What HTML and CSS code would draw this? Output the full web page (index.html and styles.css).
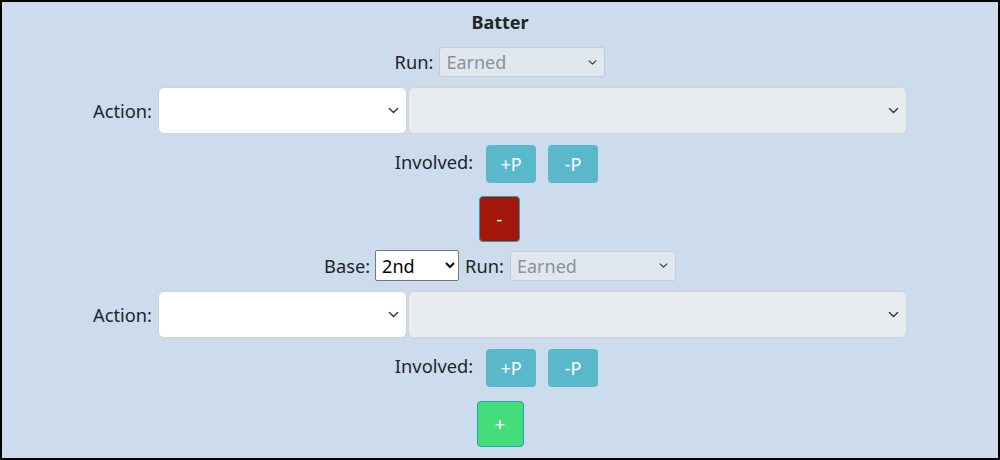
FILE: index.html
```html
<!DOCTYPE html>
<html>
<head>
<meta charset="utf-8">
<link rel="stylesheet" href="styles.css">
</head>
<body>
<div class="frame">
  <div class="title">Batter</div>

  <div class="row row-run">
    <label class="lbl">Run:</label>
    <select class="sel sel-run" disabled><option>Earned</option></select>
  </div>

  <div class="row row-action">
    <label class="lbl">Action:</label>
    <select class="sel sel-a"><option></option></select>
    <select class="sel sel-b" disabled><option></option></select>
  </div>

  <div class="row row-inv">
    <span class="lbl lbl-inv">Involved:</span>
    <button class="btn btn-info">+P</button>
    <button class="btn btn-info">-P</button>
  </div>

  <div class="row row-del">
    <button class="btn btn-del">-</button>
  </div>

  <div class="row row-base">
    <label class="lbl">Base:</label>
    <select class="sel-native"><option>2nd</option></select>
    <label class="lbl lbl-run2">Run:</label>
    <select class="sel sel-run" disabled><option>Earned</option></select>
  </div>

  <div class="row row-action">
    <label class="lbl">Action:</label>
    <select class="sel sel-a"><option></option></select>
    <select class="sel sel-b" disabled><option></option></select>
  </div>

  <div class="row row-inv">
    <span class="lbl lbl-inv">Involved:</span>
    <button class="btn btn-info">+P</button>
    <button class="btn btn-info">-P</button>
  </div>

  <div class="row row-add">
    <button class="btn btn-add">+</button>
  </div>
</div>
</body>
</html>
```

FILE: styles.css
```css
* { box-sizing: border-box; }
html, body { margin: 0; padding: 0; }
body {
  font-family: "Noto Sans", "Open Sans", sans-serif;
  color: #212529;
}
.frame {
  width: 1000px;
  height: 460px;
  border: 2px solid #000;
  background: #ccdcec;
  padding-top: 7px;
  overflow: hidden;
}
.title {
  text-align: center;
  font-weight: 700;
  font-size: 18px;
  line-height: 26px;
  height: 26px;
  color: #212529;
}
.row {
  display: flex;
  justify-content: center;
  align-items: center;
}
.lbl {
  font-size: 18.3px;
  color: #212529;
  line-height: 24px;
}
.sel {
  appearance: none;
  -webkit-appearance: none;
  font-family: inherit;
  font-size: 18px;
  border: 1px solid #ced4da;
  border-radius: 4px;
  background-color: #fff;
  background-image: url("data:image/svg+xml,%3csvg xmlns='http://www.w3.org/2000/svg' viewBox='0 0 16 16'%3e%3cpath fill='none' stroke='%23343a40' stroke-linecap='round' stroke-linejoin='round' stroke-width='2' d='M2 5l6 6 6-6'/%3e%3c/svg%3e");
  background-repeat: no-repeat;
  background-position: right 6px center;
  background-size: 13px 11px;
  color: #212529;
  padding: 0 30px 0 6px;
  margin: 0;
}
.sel:disabled {
  color: #8a9199;
  opacity: 1;
}
.row-run { margin-top: 12px; height: 30px; }
.row-run .lbl { margin-right: 6px; }
.sel-run {
  width: 166px;
  height: 30px;
  background-color: #e1e7ef;
  border-color: #c3ccd6;
  border-radius: 3px;
  background-size: 11px 9px;
  opacity: 1;
}
.row-action { margin-top: 10px; height: 47px; }
.row-action .lbl { margin-right: 6px; }
.sel-a { width: 249px; height: 47px; border-radius: 6px; }
.sel-b {
  width: 499px;
  height: 47px;
  margin-left: 1px;
  background-color: #e9ecef;
  border-radius: 6px;
}
.row-inv { margin-top: 11px; height: 38px; padding-right: 7px; }
.lbl-inv { margin-right: 13px; margin-top: -4px; }
.btn {
  font-family: inherit;
  font-size: 18px;
  color: #fff;
  cursor: pointer;
  padding: 0;
}
.btn-info {
  width: 50px;
  height: 38px;
  background: #5ab8cb;
  border: none;
  border-radius: 4px;
}
.btn-info + .btn-info { margin-left: 12px; }
.row-del { margin-top: 13px; height: 46px; padding-right: 1px; }
.btn-del {
  width: 41px;
  height: 46px;
  background: #a21709;
  border: 1px solid #1ea0b8;
  border-radius: 4px;
}
.row-base { margin-top: 8px; height: 31px; }
.row-base .lbl { margin-right: 5px; }
.sel-native {
  width: 84px;
  height: 31px;
  font-family: inherit;
  font-size: 18px;
  color: #000;
  background: #fff;
  border: 1px solid #767676;
  border-radius: 2px;
  padding: 0 2px;
  margin-right: 6px;
}
.row-base .lbl-run2 { margin-right: 6px; }
.row-add { margin-top: 14px; height: 46px; }
.btn-add {
  width: 47px;
  height: 46px;
  background: #44dd7a;
  border: 1px solid #1ea0b8;
  border-radius: 4px;
}
```
